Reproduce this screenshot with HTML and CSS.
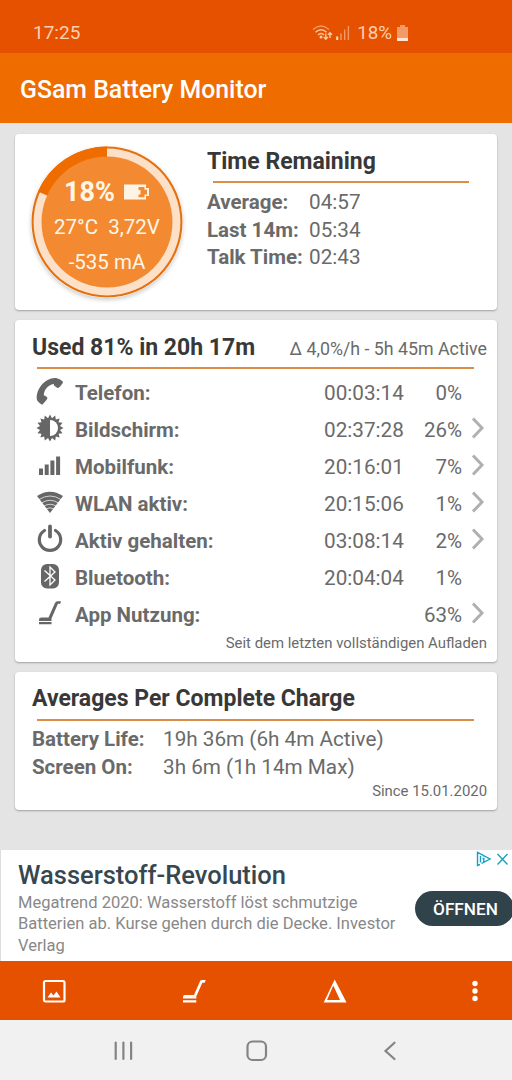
FILE: index.html
```html
<!DOCTYPE html>
<html lang="de">
<head>
<meta charset="utf-8">
<title>GSam Battery Monitor</title>
<link rel="stylesheet" href="styles.css">
</head>
<body>
<svg width="0" height="0" class="defs">
  <symbol id="chevron" viewBox="0 0 14 24"><path d="M2 2.500 L11 12 L2 21.500" fill="none" stroke="#b0b0b0" stroke-width="3"/></symbol>
</svg>
<header class="status">
  <span class="clock">17:25</span>
  <div class="status-right">
    <svg class="st-wifi" width="21" height="18" viewBox="0 0 21 18">
      <g fill="none" stroke="#fbcaa6" stroke-width="1.400">
        <path d="M1 5.500 Q9 -1.500 17 5.500" opacity=".6"/><path d="M3.500 8.300 Q9 3.300 14.500 8.300"/><path d="M6 11 Q9 8.200 12 11"/>
        <path d="M13.800 9.500 V15 M11.800 13 L13.800 15.200 L15.800 13 M18 14 V9 M16 10.800 L18 8.700 L20 10.800"/>
      </g>
      <circle cx="9" cy="13" r="1.500" fill="#fbcaa6"/>
    </svg>
    <svg class="st-signal" width="14" height="15" viewBox="0 0 14 15"><path d="M1.200 15 V11.500" stroke="#ffe0c8" stroke-width="2"/><path d="M5 15V8.500M8.700 15V4.500M12.400 15V1" stroke="#f19a66" stroke-width="1.400"/></svg>
    <span class="pct">18%</span>
    <svg class="st-batt" width="11" height="16" viewBox="0 0 11 16"><path d="M0 2 H3 V0 H8 V2 H11 V13 H0Z" fill="#f39a68"/><path d="M0 13H11V16H0Z" fill="#ffe3cf"/></svg>
  </div>
</header>
<div class="appbar">GSam Battery Monitor</div>
<main class="content">
  <section class="card overview">
    <div class="gauge">
      <svg class="gauge-ring" width="152" height="152" viewBox="0 0 152 152">
        <circle cx="76" cy="76" r="75.500" fill="#e4710f"/>
        <circle cx="76" cy="76" r="73.400" fill="#fde0c8"/>
        <path d="M76 76 V.5 A75.500 75.500 0 0 0 7 45.500 Z" fill="#ef6c00"/>
        <circle cx="76" cy="76" r="65.500" fill="#f38a32"/>
      </svg>
      <div class="gauge-text">
        <div class="level">18%
          <svg width="26" height="16" viewBox="0 0 26 16"><path d="M0 .5H22V4H25V12H22V15.500H0Z" fill="#fff3e6"/><path d="M14.500 3H20.500V5.800H23V10.500H20.500V13.200H14.500V10.500H16.500V6H14.500Z" fill="#f38a32"/></svg>
        </div>
        <div>27°C&nbsp; 3,72V</div>
        <div>-535 mA</div>
      </div>
    </div>
    <div class="remaining">
      <h2>Time Remaining</h2>
      <hr>
      <dl><dt>Average:</dt><dd>04:57</dd><dt>Last 14m:</dt><dd>05:34</dd><dt>Talk Time:</dt><dd>02:43</dd></dl>
    </div>
  </section>

  <section class="card usage">
    <div class="head"><h2>Used 81% in 20h 17m</h2><span class="rate">Δ 4,0%/h - 5h 45m Active</span></div>
    <hr>
    <ul>
      <li><svg class="ic" viewBox="0 0 30 30"><path d="M7.500 28.500 C6.500 29 2.500 25.500 2 24 C0 13 11 1 21 2 Q25 2.500 27.800 5.500 Q28.500 6.500 27 8 Q24 12.500 22.500 12 L19 9.500 C18.500 8.800 19.500 8 18.500 8 C13 9 9 14 8.800 19 C8.800 20 10 19.500 11 20.200 L12.500 22 Q12.500 23 7.500 28.500Z"/></svg><b>Telefon:</b><span class="t">00:03:14</span><span class="p">0%</span><i></i></li>
      <li><svg class="ic" viewBox="0 0 30 30"><path d="M15 1.500 L17 5.200 L20.200 2.500 L20.800 6.600 L24.600 5.400 L23.500 9.200 L27.500 9.800 L25 13 L28.500 15 L25 17 L27.500 20.200 L23.500 20.800 L24.600 24.600 L20.800 23.500 L20.200 27.500 L17 24.900 L15 28.500 L13 24.900 L9.800 27.500 L9.200 23.500 L5.400 24.600 L6.500 20.800 L2.500 20.200 L5 17 L1.500 15 L5 13 L2.500 9.800 L6.500 9.200 L5.400 5.400 L9.200 6.600 L9.800 2.500 L13 5.200Z"/><path d="M15 7 A8 8 0 0 1 15 23Z" fill="#fff"/></svg><b>Bildschirm:</b><span class="t">02:37:28</span><span class="p">26%</span><svg class="chev"><use href="#chevron"/></svg></li>
      <li><svg class="ic" viewBox="0 0 30 30"><path d="M4 18.500h4v6.500h-4zM9.700 14.500h4v10.500h-4zM15.400 10.500h4v14.500h-4zM21.100 6.500h4v18.500h-4z"/></svg><b>Mobilfunk:</b><span class="t">20:16:01</span><span class="p">7%</span><svg class="chev"><use href="#chevron"/></svg></li>
      <li><svg class="ic" viewBox="0 0 30 30"><path d="M2 9 Q15 .5 28 9 L15 26Z"/><path d="M4 12.500 Q15 5.500 26 12.500 M6.500 16 Q15 10.500 23.500 16 M9 19 Q15 15.500 21 19 M11 22 Q15 19.500 19 22" fill="none" stroke="#fff" stroke-width=".7"/></svg><b>WLAN aktiv:</b><span class="t">20:15:06</span><span class="p">1%</span><svg class="chev"><use href="#chevron"/></svg></li>
      <li><svg class="ic" viewBox="0 0 30 30"><path d="M9.500 6.500 A10.700 10.700 0 1 0 20.500 6.500" fill="none" stroke="#666" stroke-width="3.200" stroke-linecap="round"/><path d="M15 2.500V12.500" stroke="#666" stroke-width="3.800" stroke-linecap="round"/></svg><b>Aktiv gehalten:</b><span class="t">03:08:14</span><span class="p">2%</span><svg class="chev"><use href="#chevron"/></svg></li>
      <li><svg class="ic" viewBox="0 0 30 30"><rect x="6" y="3" width="18" height="24.500" rx="6"/><path d="M9.500 9.500 L20 19 L15 24 V6 L20 11 L9.500 20.500" fill="none" stroke="#fff" stroke-width="1.300"/></svg><b>Bluetooth:</b><span class="t">20:04:04</span><span class="p">1%</span><i></i></li>
      <li><svg class="ic" viewBox="0 0 30 30"><path d="M4 23 V21.500 Q4 19.500 6.500 19.500 H13.500 L20 5 Q20.700 3.300 22.500 3.300 H26 L25.300 5.700 H22.900 L16.500 20.500 V23Z M4 24H16.500V26.200H4Z"/></svg><b>App Nutzung:</b><span class="t"></span><span class="p">63%</span><svg class="chev"><use href="#chevron"/></svg></li>
    </ul>
    <p class="note">Seit dem letzten vollständigen Aufladen</p>
  </section>

  <section class="card averages">
    <h2>Averages Per Complete Charge</h2>
    <hr>
    <dl><dt>Battery Life:</dt><dd>19h 36m (6h 4m Active)</dd><dt>Screen On:</dt><dd>3h 6m (1h 14m Max)</dd></dl>
    <p class="note">Since 15.01.2020</p>
  </section>
</main>
<aside class="ad">
  <div class="ad-copy">
    <div class="ad-title">Wasserstoff-Revolution</div>
    <p>Megatrend 2020: Wasserstoff löst schmutzige<br>Batterien ab. Kurse gehen durch die Decke. Investor<br>Verlag</p>
  </div>
  <div class="ad-btn">ÖFFNEN</div>
  <svg class="ad-marks" width="34" height="16" viewBox="0 0 34 16" fill="none" stroke="#18a0c0" stroke-width="1.400"><path d="M4 13.500 L1.500 14.500 V1.500 L14 8 L5.500 12.500 M4.500 5V11.500M7.500 4V5.500M6.500 7.500H7.800V11"/><path d="M21.500 3 L31.500 13.500 M31.500 3 L21.500 13.500"/></svg>
</aside>
<nav class="toolbar">
  <svg width="24" height="24" viewBox="0 0 24 24"><rect x="2" y="2" width="20.500" height="20.500" rx="1.500" fill="none" stroke="#fff" stroke-width="2.200"/><path d="M5.500 18.500 L9 13.500 L11.500 16.500 L14.500 12.500 L18.500 18.500Z" fill="#fff"/></svg>
  <svg width="24" height="24" viewBox="0 0 24 24" fill="#fff"><path d="M1 19.500 V18 Q1 16 3 16 H12 L18 2.200 Q18.500 1 20 1 H23.700 L22.700 3.700 H20.300 L14.300 17.500 V19.500Z M1 21.300H14.300V23.500H1Z"/></svg>
  <svg width="24" height="24" viewBox="0 0 24 24" fill="#fff"><path fill-rule="evenodd" d="M11.700 .5 L23.500 23.500 H.7Z M10.300 6.500 L4 21 H17Z"/></svg>
  <svg width="24" height="24" viewBox="0 0 24 24" fill="#fff"><circle cx="12" cy="4.500" r="2.700"/><circle cx="12" cy="12" r="2.700"/><circle cx="12" cy="19.500" r="2.700"/></svg>
</nav>
<footer class="sysnav">
  <svg width="20" height="20" viewBox="0 0 20 20"><path d="M1.700 1.500V18M9.400 1.500V18M17.100 1.500V18"/></svg>
  <svg width="22" height="22" viewBox="0 0 22 22"><rect x="1.500" y="1.500" width="18.500" height="18.500" rx="5"/></svg>
  <svg width="14" height="20" viewBox="0 0 14 20"><path d="M11.500 1.700 L2.500 10 L11.500 18"/></svg>
</footer>
</body>
</html>
```
FILE: styles.css
```css
* { box-sizing: border-box; margin: 0; padding: 0; }
body { width: 512px; height: 1080px; overflow: hidden; display: flex; flex-direction: column; background: #e4e4e4; color: #6a6a6a; font-family: Roboto, sans-serif; font-size: 20.500px; }
.defs { position: absolute; }
.status { height: 53px; flex: none; background: #e65100; display: flex; justify-content: space-between; align-items: center; padding: 12px 104px 0 33px; color: #fbcfb0; font-size: 19px; }
.status-right { display: flex; align-items: center; }
.pct { font-size: 18.800px; }
.st-signal { margin: 0 7px 0 3px; }
.st-batt { margin-left: 5px; }
.appbar { height: 70px; flex: none; background: #ef6c00; color: #fff; font-size: 24.850px; font-weight: 500; line-height: 73px; padding-left: 20px; }
.content { height: 727px; flex: none; padding: 11px 15px 0; display: flex; flex-direction: column; gap: 10px; }
.card { background: #fff; border-radius: 4px; box-shadow: 0 1px 2px rgba(0,0,0,.3); flex: none; }
h2 { color: #383838; font-size: 23px; font-weight: 700; line-height: 28px; white-space: nowrap; }
hr { border: 0; height: 2px; background: #d98f48; }
.overview { height: 176px; display: flex; }
.gauge { width: 152px; height: 152px; margin: 12px 0 0 16px; display: grid; border-radius: 50%; box-shadow: 0 2px 4px rgba(0,0,0,.2); }
.gauge > * { grid-area: 1 / 1; }
.gauge-text { color: #fff6e8; text-align: center; line-height: 35px; padding-top: 27px; z-index: 1; }
.level { font-size: 27px; font-weight: 700; display: flex; justify-content: center; align-items: center; gap: 9px; line-height: 36px; height: 37px; }
.remaining { margin: 14px 0 0 24px; width: 280px; }
.remaining hr { width: 256px; margin: 5px 0 6px 6px; }
dl { display: grid; grid-template-columns: 102px 1fr; line-height: 27.700px; white-space: nowrap; }
dd, .t { font-size: 20.700px; }
dt, b { font-weight: 700; }
.usage { height: 342px; padding: 14px 10px 0 17px; }
.head { display: flex; justify-content: space-between; align-items: baseline; }
.rate { font-size: 17.800px; }
.usage hr, .averages hr { width: 437px; margin: 5px 0 5px 5px; }
ul { list-style: none; }
li { height: 37px; display: grid; grid-template-columns: 43px 1fr 82px 56px 25px; align-items: center; }
.ic { width: 30px; height: 30px; margin: -3px 0 0 3px; fill: #666; }
.t { white-space: nowrap; }
.p { text-align: right; }
.chev { width: 14px; height: 24px; margin: -3px 0 0 9px; }
.note { font-size: 14.900px; line-height: 20px; text-align: right; }
.averages { height: 138px; padding: 13px 10px 0 17px; }
.averages hr { margin-top: 6px; }
.averages dl { grid-template-columns: 131px 1fr; }
.ad { height: 111px; flex: none; background: #fff; position: relative; overflow: hidden; border-left: 1px solid #ddd; display: flex; }
.ad-copy { padding: 10px 0 0 17px; width: 414px; white-space: nowrap; flex: none; }
.ad-title { font-size: 25.500px; font-weight: 500; line-height: 30px; color: #37474f; }
.ad p { font-size: 16.550px; line-height: 21.300px; color: #888; margin-top: 2px; }
.ad-btn { flex: none; width: 99px; height: 35px; margin-top: 41px; border-radius: 18px; background: #30424a; color: #fff; font-weight: 500; font-size: 17.200px; text-align: center; line-height: 37px; padding-left: 2px; }
.ad-marks { position: absolute; right: 2px; top: 1px; }
.toolbar { height: 59px; flex: none; background: #e65100; display: flex; justify-content: space-between; align-items: center; padding: 0 25px 0 42px; }
.sysnav { height: 60px; flex: none; background: #f1f1f1; display: flex; justify-content: space-between; align-items: center; padding: 2px 115px 0 114px; fill: none; stroke: #848484; stroke-width: 2.200; }
.sysnav svg { stroke-linecap: round; }
.sysnav svg:nth-child(2) { margin-right: 3px; }
```
